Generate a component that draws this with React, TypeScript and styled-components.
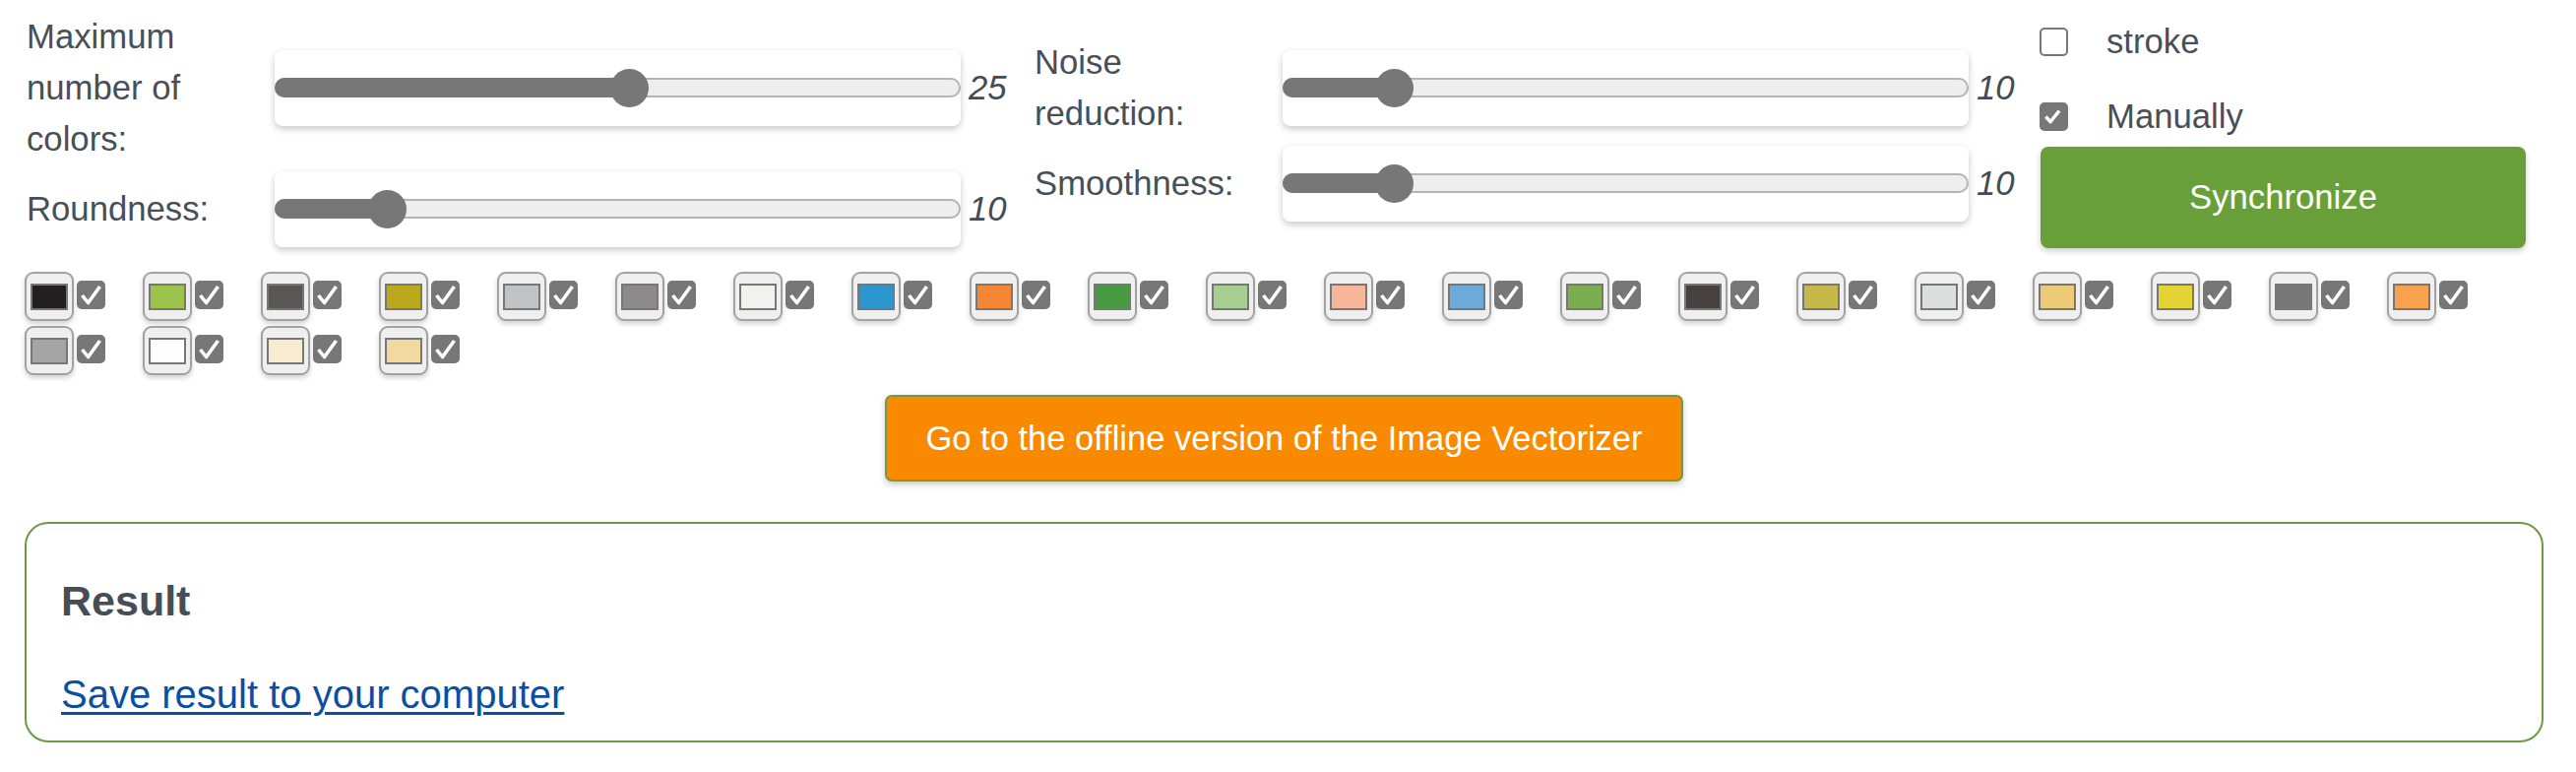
import React from "react";
import styled, { createGlobalStyle } from "styled-components";

const GlobalStyle = createGlobalStyle`
  html, body { margin: 0; padding: 0; background: #ffffff; }
  body {
    font-family: "Liberation Sans", Arial, Helvetica, sans-serif;
    color: #474f58;
  }
`;

const Page = styled.div`
  width: 2617px;
  box-sizing: border-box;
  padding: 11px 33px 30px 25px;
`;

const Controls = styled.div`
  display: flex;
  align-items: center;
  height: 246px;
`;

const Column = styled.div`
  display: flex;
  flex-direction: column;
  width: 1024px;
  flex: none;
`;

const SliderRow = styled.div`
  display: flex;
  align-items: center;
  min-height: 90px;
`;

const Label = styled.div`
  width: 254px;
  flex: none;
  box-sizing: border-box;
  padding: 0 24px 0 2px;
  font-size: 34.7px;
  line-height: 52px;
`;

const SliderCard = styled.div`
  width: 697px;
  height: 77px;
  flex: none;
  background: #ffffff;
  border-radius: 8px;
  box-shadow: 0 3px 7px rgba(0, 0, 0, 0.22);
  display: flex;
  align-items: center;
`;

const Track = styled.div`
  position: relative;
  width: 100%;
  height: 20px;
  border-radius: 10px;
  background: #eeeeee;
  box-shadow: inset 0 0 0 2px #b4b4b4;
`;

const Fill = styled.div`
  position: absolute;
  left: 0;
  top: 0;
  bottom: 0;
  border-radius: 10px 0 0 10px;
  background: #777777;
`;

const Thumb = styled.div`
  position: absolute;
  top: 50%;
  width: 39px;
  height: 39px;
  margin: -19.5px 0 0 -19.5px;
  border-radius: 50%;
  background: #777777;
`;

const Value = styled.div`
  width: 73px;
  flex: none;
  box-sizing: border-box;
  padding-left: 8px;
  font-size: 34.7px;
  font-style: italic;
  line-height: 52px;
  color: #444b52;
`;

const SideColumn = styled.div`
  display: flex;
  flex-direction: column;
  width: 493px;
  flex: none;
`;

const CheckRow = styled.label<{ $gap: number }>`
  display: flex;
  align-items: center;
  height: 52px;
  margin-bottom: ${(p) => p.$gap}px;
  font-size: 34.7px;
  line-height: 52px;
`;

const BigBox = styled.span<{ $checked: boolean }>`
  display: flex;
  align-items: center;
  justify-content: center;
  width: 29px;
  height: 29px;
  flex: none;
  box-sizing: border-box;
  margin: 0 39px 0 -1px;
  border-radius: 5px;
  border: 2px solid #777777;
  background: ${(p) => (p.$checked ? "#777777" : "#ffffff")};
`;

const SyncButton = styled.button`
  height: 103px;
  width: 100%;
  border: none;
  border-radius: 8px;
  background: #689f38;
  color: #ffffff;
  font-family: inherit;
  font-size: 34.7px;
  box-shadow: 0 3px 6px rgba(0, 0, 0, 0.2);
  cursor: pointer;
`;

const SwatchGrid = styled.div`
  display: flex;
  flex-wrap: wrap;
  margin-top: 19px;
`;

const SwatchItem = styled.div`
  display: flex;
  align-items: center;
  gap: 3px;
  margin: 0 38px 5px 0;
`;

const SwatchFrame = styled.div`
  width: 50px;
  height: 50px;
  box-sizing: border-box;
  border: 2px solid #a2a2a2;
  border-radius: 9px;
  background: #efefef;
  display: flex;
  align-items: center;
  justify-content: center;
  box-shadow: 0 3px 5px rgba(0, 0, 0, 0.18);
`;

const SwatchColor = styled.div<{ $color: string }>`
  width: 38px;
  height: 27px;
  box-sizing: border-box;
  border: 2px solid #777777;
  background: ${(p) => p.$color};
`;

const MiniCheck = styled.span`
  display: flex;
  width: 29px;
  height: 29px;
  border-radius: 5px;
  background: #777777;
  margin-top: -3px;
`;

const CenterRow = styled.div`
  display: flex;
  justify-content: center;
  margin-top: 15px;
`;

const OfflineButton = styled.button`
  width: 811px;
  height: 88px;
  box-sizing: border-box;
  border: 2px solid #7b963b;
  border-radius: 7px;
  background: #f98a00;
  color: #ffffff;
  font-family: inherit;
  font-size: 34.5px;
  box-shadow: 0 3px 6px rgba(0, 0, 0, 0.22);
  cursor: pointer;
`;

const ResultBox = styled.section`
  margin-top: 41px;
  box-sizing: border-box;
  height: 224px;
  border: 2px solid #6a9a44;
  border-radius: 24px;
  padding: 0 35px 24px;
`;

const ResultTitle = styled.h3`
  margin: 54px 0 47px;
  font-size: 43px;
  line-height: 49px;
  font-weight: 700;
  color: #464d55;
`;

const LinkLine = styled.div`
  font-size: 40px;
  line-height: 46px;
`;

const SaveLink = styled.a`
  color: #0b4ea2;
  text-decoration: underline;
  text-decoration-thickness: 3px;
  text-underline-offset: 4px;
`;

type SliderDef = { label: string; value: number; pos: number };

const Slider: React.FC<SliderDef> = ({ label, value, pos }) => {
  const center = 19.5 + pos * (697 - 39);
  return (
    <SliderRow>
      <Label>{label}</Label>
      <SliderCard>
        <Track>
          <Fill style={{ width: `${center}px` }} />
          <Thumb style={{ left: `${center}px` }} />
        </Track>
      </SliderCard>
      <Value>{value}</Value>
    </SliderRow>
  );
};

const Check: React.FC<{ d: string; w: number }> = ({ d, w }) => (
  <svg width="29" height="29" viewBox="0 0 29 29">
    <path d={d} fill="none" stroke="#ffffff" strokeWidth={w} strokeLinejoin="round" />
  </svg>
);

const colors = [
  "#231f20", "#9cc34b", "#5a5655", "#bca81c", "#c0c3c6", "#8c8a8b", "#f1f1f0",
  "#2e96cf", "#f58634", "#479a3f", "#a8cf92", "#f7b699", "#6eaad8", "#7aae50",
  "#474240", "#c7b84a", "#dadedd", "#edca76", "#e5d336", "#787878", "#f8a14e",
  "#a6a5a6", "#fefefe", "#f8ebcf", "#f2d9a0",
];

export default function App() {
  return (
    <>
      <GlobalStyle />
      <Page>
        <Controls>
          <Column>
            <Slider label="Maximum number of colors:" value={25} pos={0.518} />
            <Slider label="Roundness:" value={10} pos={0.144} />
          </Column>
          <Column>
            <Slider label="Noise reduction:" value={10} pos={0.143} />
            <Slider label="Smoothness:" value={10} pos={0.143} />
          </Column>
          <SideColumn>
            <CheckRow $gap={24}>
              <BigBox $checked={false} />
              stroke
            </CheckRow>
            <CheckRow $gap={5}>
              <BigBox $checked={true}>
                <Check d="M5 14.5 L10.5 20.5 L21 7.5" w={4} />
              </BigBox>
              Manually
            </CheckRow>
            <SyncButton>Synchronize</SyncButton>
          </SideColumn>
        </Controls>

        <SwatchGrid>
          {colors.map((c, i) => (
            <SwatchItem key={i}>
              <SwatchFrame>
                <SwatchColor $color={c} />
              </SwatchFrame>
              <MiniCheck>
                <Check d="M5.5 15 L11.5 22.5 L23.5 6" w={3.6} />
              </MiniCheck>
            </SwatchItem>
          ))}
        </SwatchGrid>

        <CenterRow>
          <OfflineButton>Go to the offline version of the Image Vectorizer</OfflineButton>
        </CenterRow>

        <ResultBox>
          <ResultTitle>Result</ResultTitle>
          <LinkLine>
            <SaveLink href="#">Save result to your computer</SaveLink>
          </LinkLine>
        </ResultBox>
      </Page>
    </>
  );
}
